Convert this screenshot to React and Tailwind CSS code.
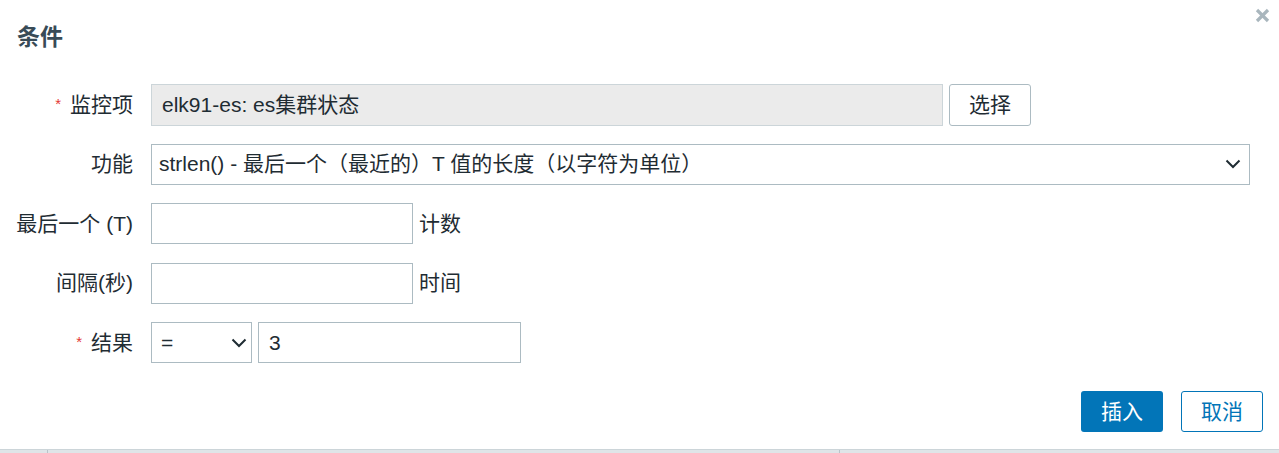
import React from "react";

const font = { fontFamily: '"Liberation Sans", Arial, "Noto Sans CJK SC", sans-serif' };

function Label({ required, children }) {
  return (
    <div className="w-[133px] shrink-0 text-right text-[21px] text-[#1f2c33] whitespace-nowrap">
      {required && (
        <span className="mr-[9px] align-[3px] text-[15px] text-[#e33734]">*</span>
      )}
      {children}
    </div>
  );
}

function Chevron() {
  return (
    <svg className="w-[16px] h-[10px] text-[#1f2c33]" viewBox="0 0 16 10" fill="none" stroke="currentColor" strokeWidth="2">
      <polyline points="1.5 1.5 8 8 14.5 1.5" />
    </svg>
  );
}

function Row({ children }) {
  return <div className="flex items-center h-[41px]">{children}</div>;
}

export default function App() {
  return (
    <div className="relative w-[1279px] h-[453px] bg-white flex flex-col overflow-hidden" style={font}>
      {/* close */}
      <button className="absolute top-[8px] right-[9px] w-[15px] h-[15px] text-[#a9b6bd]">
        <svg viewBox="0 0 15 15" className="w-[15px] h-[15px]" stroke="currentColor" strokeWidth="3.2">
          <line x1="2" y1="2" x2="13" y2="13" />
          <line x1="13" y1="2" x2="2" y2="13" />
        </svg>
      </button>

      <h2 className="pl-[17px] pt-[21px] text-[23px] leading-[32px] font-bold text-[#384b57]">条件</h2>

      <div className="mt-[31px] flex flex-col gap-[18.5px]">
        <Row>
          <Label required>监控项</Label>
          <div className="ml-[18px] w-[792px] h-[42px] border border-[#ccd5d9] bg-[#ebebeb] flex items-center pl-[10px] text-[21px] text-[#1f2c33]">
            elk91-es: es集群状态
          </div>
          <button className="ml-[6px] w-[82px] h-[42px] border border-[#acbbc2] rounded-[3px] bg-white text-[21px] text-[#1f2c33]">
            选择
          </button>
        </Row>

        <Row>
          <Label>功能</Label>
          <div className="ml-[18px] w-[1099px] h-[41px] border border-[#acbbc2] flex items-center justify-between pl-[7px] pr-[8px] text-[21px] text-[#1f2c33]">
            <span>strlen() - 最后一个（最近的）T 值的长度（以字符为单位）</span>
            <Chevron />
          </div>
        </Row>

        <Row>
          <Label>最后一个 (T)</Label>
          <div className="ml-[18px] w-[262px] h-[41px] border border-[#acbbc2]" />
          <span className="ml-[6px] text-[21px] text-[#1f2c33]">计数</span>
        </Row>

        <Row>
          <Label>间隔(秒)</Label>
          <div className="ml-[18px] w-[262px] h-[41px] border border-[#acbbc2]" />
          <span className="ml-[6px] text-[21px] text-[#1f2c33]">时间</span>
        </Row>

        <Row>
          <Label required>结果</Label>
          <div className="ml-[18px] w-[101px] h-[41px] border border-[#acbbc2] flex items-center justify-between pl-[9px] pr-[4px] text-[21px] text-[#1f2c33]">
            <span>=</span>
            <Chevron />
          </div>
          <div className="ml-[6px] w-[263px] h-[41px] border border-[#acbbc2] flex items-center pl-[10px] text-[21px] text-[#1f2c33]">
            3
          </div>
        </Row>
      </div>

      <div className="mt-[28px] flex justify-end gap-[18px] pr-[16px]">
        <button className="w-[82px] h-[41px] rounded-[3px] bg-[#0275b8] text-white text-[21px]">插入</button>
        <button className="w-[82px] h-[41px] rounded-[3px] border border-[#0275b8] bg-white text-[#0275b8] text-[21px]">取消</button>
      </div>

      <div className="mt-auto h-[4px] bg-[#dfe5e8] border-t border-[#ccd5d9] flex">
        <div className="w-[48px] border-r border-[#b8c4ca]" />
        <div className="w-[792px] border-r border-[#b8c4ca]" />
      </div>
    </div>
  );
}
